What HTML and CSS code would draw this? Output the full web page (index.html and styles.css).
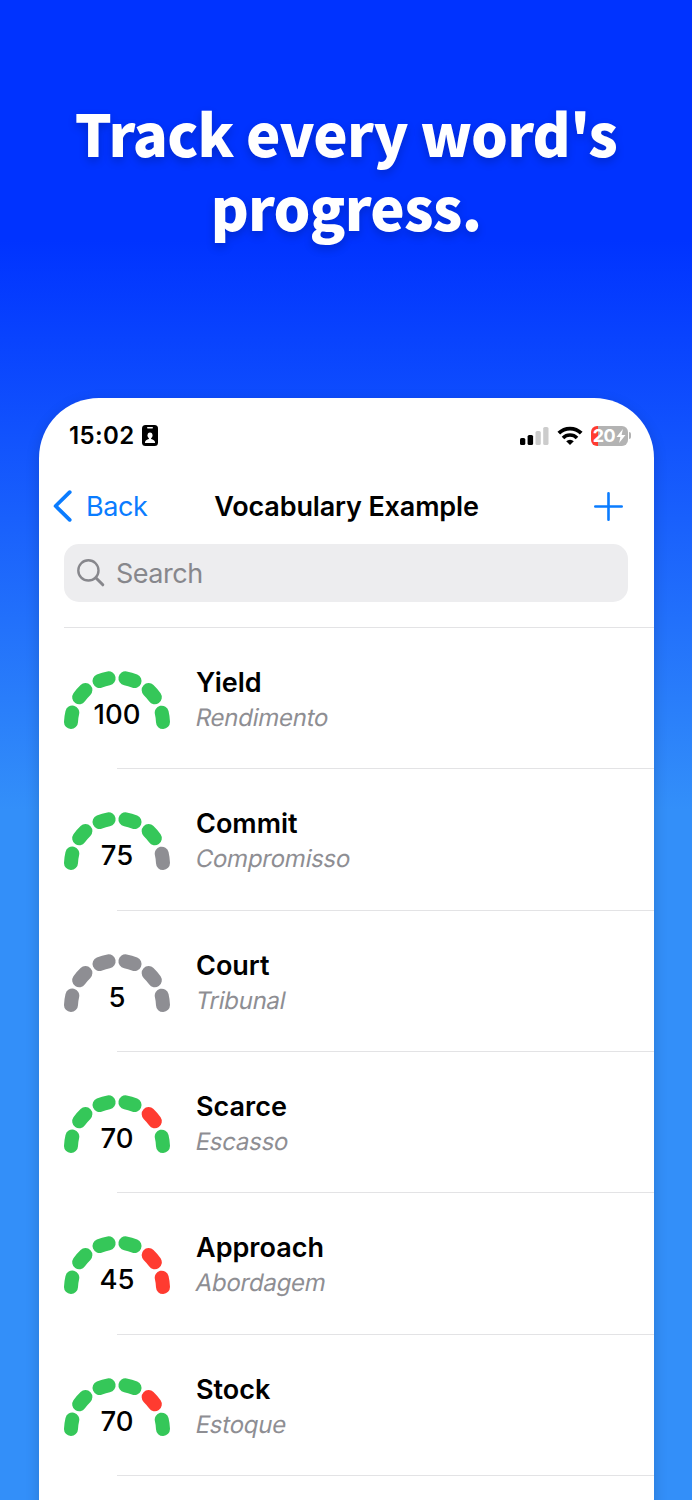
FILE: index.html
```html
<!DOCTYPE html>
<html lang="en">
<head>
    <meta charset="UTF-8">
    <meta name="viewport" content="width=device-width, initial-scale=1.0">
    <title>Vocabulary Example</title>
    <link rel="stylesheet" href="styles.css">
</head>
<body>
    <h1 class="headline">Track every word's<br>progress.</h1>

    <div class="phone">
        <div class="status-bar">
            <span class="time">15:02</span>
            <svg class="badge-icon" width="16" height="21" viewBox="0 0 16 21">
                <rect width="16" height="21" rx="3.5" fill="#000"/>
                <rect x="5" y="2" width="6" height="1.6" rx="0.8" fill="#fff"/>
                <ellipse cx="8" cy="10.3" rx="2.5" ry="2.9" fill="#fff"/>
                <path d="M2.9 18c0-2.6 2-3.6 4-4V12h2.2v2c2 .4 4 1.4 4 4z" fill="#fff"/>
            </svg>
            <div class="status-icons">
                <svg width="29" height="18" viewBox="0 0 29 18">
                    <rect x="0" y="11" width="5.3" height="7" rx="1.6" fill="#000"/>
                    <rect x="7.6" y="8" width="5.5" height="10" rx="1.6" fill="#000"/>
                    <rect x="15.5" y="4" width="5.3" height="14" rx="1.6" fill="#ccc"/>
                    <rect x="23.2" y="0" width="5.3" height="18" rx="1.6" fill="#ccc"/>
                </svg>
                <svg class="wifi" width="26" height="19" viewBox="0 0 26 19">
                    <path d="M1.8 7.2a15.8 15.8 0 0 1 22.4 0" fill="none" stroke="#000" stroke-width="3.8"/>
                    <path d="M6 11.9a9.9 9.9 0 0 1 14 0" fill="none" stroke="#000" stroke-width="3.6"/>
                    <path d="M9.2 15.2a5.4 5.4 0 0 1 7.6 0L13 19z" fill="#000"/>
                </svg>
                <div class="battery">
                    <span>20</span>
                    <svg width="10" height="14" viewBox="0 0 9 14">
                        <path d="M6.4 0 0 8h3.9L2.6 14 9 6H5.1z" fill="#fff"/>
                    </svg>
                </div>
                <div class="battery-tip"></div>
            </div>
        </div>

        <div class="nav-bar">
            <div class="back">
                <svg width="19" height="32" viewBox="0 0 19 32">
                    <path d="M16.7 2.2 2.6 16l14.1 13.8" fill="none" stroke="#0a7cff" stroke-width="3.8" stroke-linecap="round" stroke-linejoin="round"/>
                </svg>
                <span>Back</span>
            </div>
            <div class="nav-title">Vocabulary Example</div>
            <svg class="add" width="29" height="29" viewBox="0 0 29 29">
                <path d="M14.5 1.3v26.4M1.3 14.5h26.4" stroke="#0a7cff" stroke-width="2.6" stroke-linecap="round"/>
            </svg>
        </div>

        <div class="search">
            <svg width="28" height="28" viewBox="0 0 28 28">
                <circle cx="11.4" cy="11.4" r="10.1" fill="none" stroke="#87878c" stroke-width="2.4"/>
                <path d="m18.8 18.8 7 7" stroke="#87878c" stroke-width="3" stroke-linecap="round"/>
            </svg>
            <span>Search</span>
        </div>

        <div class="word-list" id="wordList"></div>
    </div>

    <script>
        // g = correct, r = wrong, n = not answered
        const words = [
            { word: 'Yield', translation: 'Rendimento', score: 100, results: 'gggggg' },
            { word: 'Commit', translation: 'Compromisso', score: 75, results: 'gggggn' },
            { word: 'Court', translation: 'Tribunal', score: 5, results: 'nnnnnn' },
            { word: 'Scarce', translation: 'Escasso', score: 70, results: 'ggggrg' },
            { word: 'Approach', translation: 'Abordagem', score: 45, results: 'ggggrr' },
            { word: 'Stock', translation: 'Estoque', score: 70, results: 'ggggrg' }
        ];

        function renderGauge(results) {
            const segments = results.split('').map((result, i) =>
                `<path class="segment ${result}" d="M7 52A46 46 0 0 1 8.3 42.6" transform="rotate(${i * 32.9} 53 53.5)"/>`
            );
            return `<svg width="106" height="60" viewBox="0 0 106 60">${segments.join('')}</svg>`;
        }

        document.getElementById('wordList').innerHTML = words.map(item => `
            <div class="word-row">
                <div class="gauge">
                    ${renderGauge(item.results)}
                    <span class="score">${item.score}</span>
                </div>
                <div class="word-text">
                    <div class="word">${item.word}</div>
                    <div class="translation">${item.translation}</div>
                </div>
            </div>
        `).join('');
    </script>
</body>
</html>
```
FILE: styles.css
```css
* {
    box-sizing: border-box;
}
body {
    margin: 0;
    height: 1500px;
    overflow: hidden;
    font-family: Inter, "Liberation Sans", sans-serif;
    color: #000;
    background: linear-gradient(#0033ff 240px, #338ff9 810px);
}
.headline {
    margin: 0;
    padding-top: 95px;
    height: 398px;
    font-family: "Noto Sans CJK SC", "Noto Sans", sans-serif;
    font-size: 58px;
    font-weight: 900;
    line-height: 74px;
    letter-spacing: -0.75px;
    text-align: center;
    color: #fff;
    text-shadow: 0 4px 10px rgba(0, 0, 0, 0.2);
}
.phone {
    margin: 0 38px 0 39px;
    height: 1160px;
    background: #fff;
    border-radius: 60px;
    box-shadow: 0 4px 14px rgba(0, 0, 0, 0.16);
}
.status-bar {
    display: flex;
    align-items: center;
    height: 75px;
    padding: 0 23px 0 30px;
}
.time {
    font-size: 24px;
    font-weight: 600;
    letter-spacing: 0.4px;
}
.badge-icon {
    margin-left: 7px;
}
.status-icons {
    display: flex;
    align-items: center;
    margin-left: auto;
}
.wifi {
    margin: 0 8px 0 8px;
}
.battery {
    display: flex;
    align-items: center;
    justify-content: center;
    gap: 1px;
    width: 37px;
    height: 20px;
    border-radius: 6px;
    background: linear-gradient(90deg, #ff3b30 7px, #b3b3b3 7px);
    color: #fff;
    font-size: 18px;
    font-weight: 700;
    letter-spacing: -0.5px;
}
.battery-tip {
    width: 2px;
    height: 7px;
    margin-left: 1px;
    border-radius: 0 2px 2px 0;
    background: #b3b3b3;
}
.nav-bar {
    display: grid;
    grid-template-columns: 1fr auto 1fr;
    align-items: center;
    height: 66px;
    padding: 0 14px;
    font-size: 27px;
}
.back {
    display: flex;
    align-items: center;
    gap: 14px;
    color: #0a7cff;
    letter-spacing: -0.4px;
}
.nav-title {
    font-weight: 600;
    letter-spacing: -0.15px;
}
.add {
    justify-self: end;
    margin-right: 17px;
}
.search {
    display: flex;
    align-items: center;
    gap: 11px;
    height: 58px;
    margin: 5px 26px 25px 25px;
    padding-left: 13px;
    border-radius: 15px;
    background: #ededef;
    color: #87878c;
    font-size: 27px;
    letter-spacing: -0.5px;
}
.word-list {
    margin-left: 25px;
    border-top: 1px solid #e3e3e5;
}
.word-row {
    position: relative;
    display: flex;
    height: 141.35px;
    padding-top: 42px;
}
.word-row::after {
    content: "";
    position: absolute;
    left: 53px;
    right: 0;
    bottom: 0;
    height: 1px;
    background: #e3e3e5;
}
.gauge {
    position: relative;
    width: 106px;
    height: 60px;
}
.segment {
    fill: none;
    stroke-width: 14px;
    stroke-linecap: round;
}
.segment.g {
    stroke: #35c759;
}
.segment.r {
    stroke: #ff3b30;
}
.segment.n {
    stroke: #8e8e93;
}
.score {
    position: absolute;
    left: 0;
    right: 0;
    top: 28px;
    line-height: 32px;
    text-align: center;
    font-size: 27.5px;
    font-weight: 500;
}
.word-text {
    margin-left: 26px;
}
.word {
    margin-top: -5px;
    font-size: 27px;
    font-weight: 600;
    line-height: 35px;
}
/* slanted upright face, keeps the double-storey a */
.translation {
    font-size: 24px;
    line-height: 36px;
    letter-spacing: -0.25px;
    color: #8e8e93;
    transform: skewX(-11deg);
}
```
